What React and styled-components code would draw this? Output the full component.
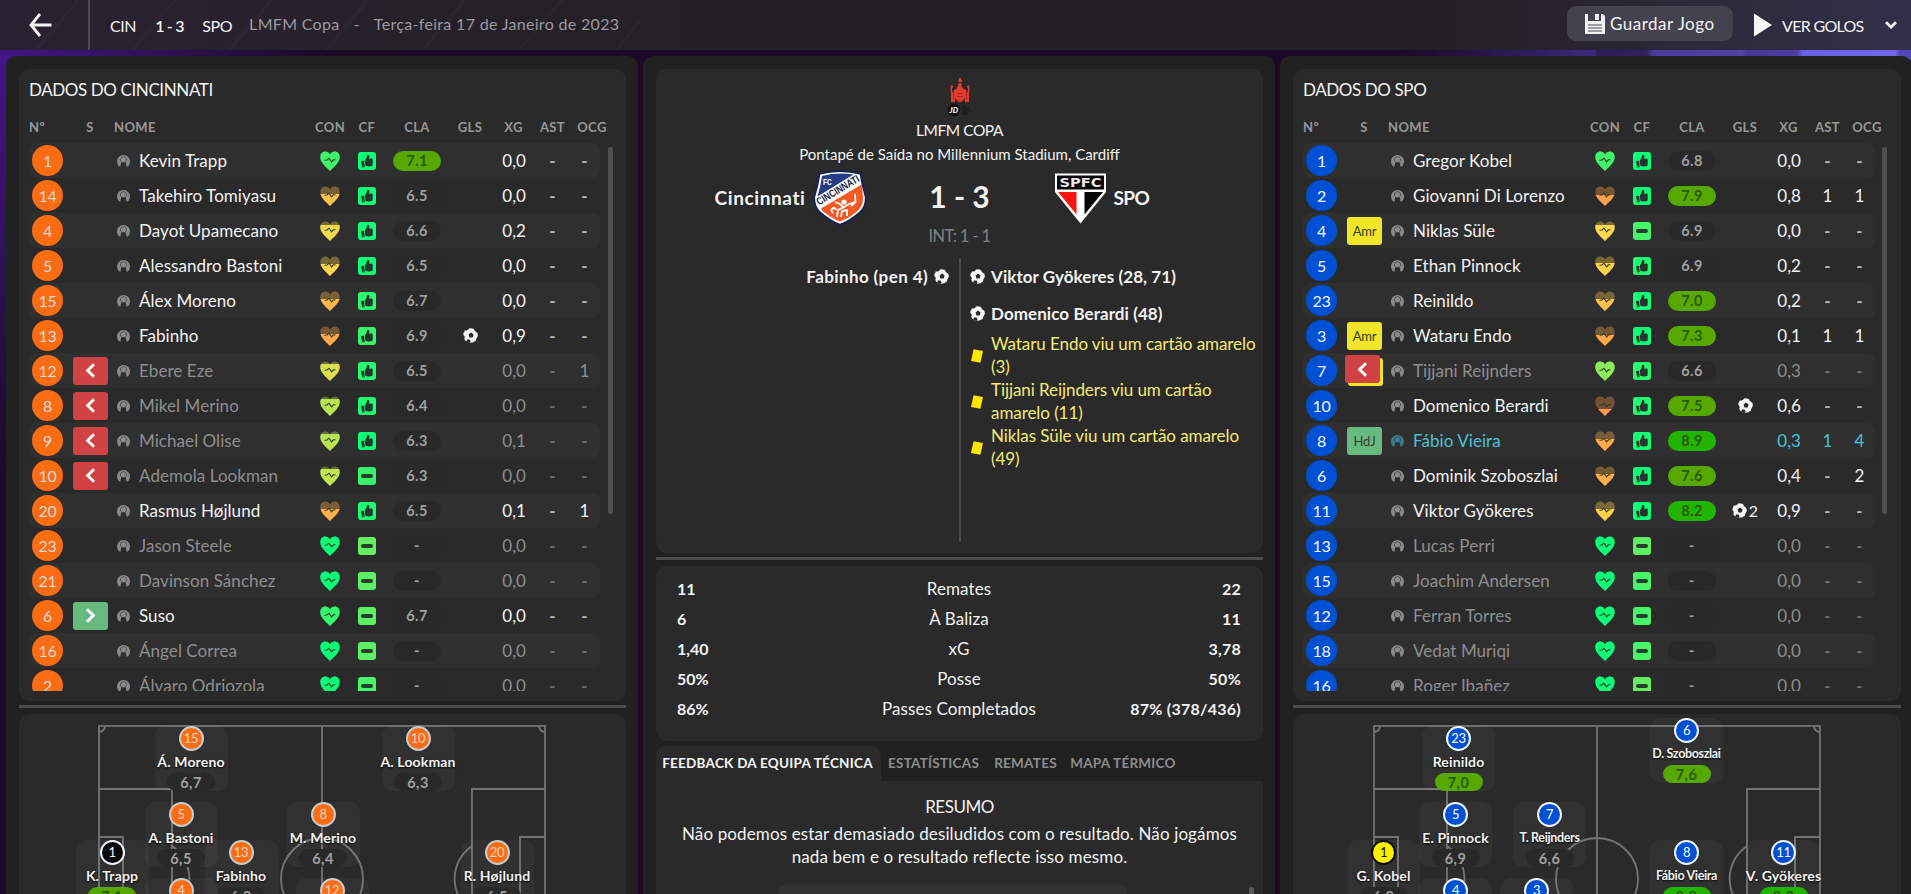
import React from 'react';
import styled, { createGlobalStyle, css } from 'styled-components';
import { FaThumbsUp } from 'react-icons/fa';

const GlobalStyle = createGlobalStyle`
  * { box-sizing: border-box; }
  body {
    margin: 0;
    overflow: hidden;
    background: #1a0a26;
    color: #f2f2f2;
    font-family: Lato, "Open Sans", sans-serif;
    font-size: 17px;
  }
`;

const Page = styled.div`
  height: 894px;
  overflow: hidden;
  display: flex;
  flex-direction: column;
  background:
    linear-gradient(90deg, transparent 1400px, #2a1850 1500px, #3c2a80 1594px, #2d1a58 1598px, #33215f 1647px, #4a3b9c 1653px, #5142a6 1742px, #44379a 1748px, #4c3fa4 1797px, #6c60e2 1803px, #7166e8 1895px, #5245b5 1900px) 0 0 / 100% 66px no-repeat,
    radial-gradient(ellipse 330px 420px at 0 60px, #401688 0, #2c1050 55%, transparent 100%),
    #1a0a26;
`;

const TopBar = styled.header`
  height: 50px;
  flex: none;
  display: flex;
  align-items: center;
  background:
    repeating-linear-gradient(130deg, transparent 0 58px, rgba(150, 120, 190, 0.04) 59px 61px, transparent 62px 74px) 0 0 / 640px 100% no-repeat,
    linear-gradient(90deg, #2a2132 0, #232126 30%, #221f24 75%, #2d2a3c 90%, #323049 100%);
`;

const BackButton = styled.div`
  width: 90px;
  height: 50px;
  padding-left: 29px;
  display: flex;
  align-items: center;
  border-right: 2px solid #4f4955;
`;

const TopScore = styled.div`
  display: flex;
  gap: 19px;
  margin-left: 20px;
  font-size: 16px;
  letter-spacing: -0.4px;
  white-space: nowrap;
  span:nth-child(2) {
    width: 28px;
    font-weight: 600;
    letter-spacing: -0.8px;
  }
`;

const TopMeta = styled.div`
  display: flex;
  margin: -3px 0 0 17px;
  gap: 14px;
  color: #9c999f;
  font-size: 16px;
  letter-spacing: 0.32px;
  white-space: nowrap;
`;

const TopActions = styled.div`
  margin-left: auto;
  display: flex;
  align-items: center;
  padding-right: 14px;
`;

const SaveButton = styled.div`
  width: 166px;
  height: 35px;
  margin: -3px 20px 0 0;
  border-radius: 9px;
  background: #45424f;
  display: flex;
  align-items: center;
  padding-left: 18px;
  gap: 5px;
  letter-spacing: 0.5px;
  white-space: nowrap;
`;

const WatchGoals = styled.div`
  display: flex;
  align-items: center;
  font-size: 16px;
  letter-spacing: -0.7px;
  white-space: nowrap;
  span { width: 103px; margin-left: 10px; }
`;

const Columns = styled.main`
  flex: 1;
  min-height: 0;
  display: grid;
  grid-template-columns: 632px 632px 632px;
  gap: 5px;
  padding: 6px 0 0 6px;
`;

const Panel = styled.section`
  display: flex;
  flex-direction: column;
  min-height: 0;
  background: #212121;
  border-radius: 10px 10px 0 0;
  padding: 13px ${p => (p.$away ? 11 : 12)}px 0 13px;
`;

const Card = styled.div`
  flex: none;
  height: ${p => (p.$height ? p.$height + 'px' : 'auto')};
  background: #2a2a2a;
  border-radius: 11px;
`;

const Splitter = styled.div`
  flex: none;
  height: 3px;
  margin: 4px 0 6px;
  background: #4b4b4b;
`;

/* squad table */

const SquadCard = styled(Card)`
  padding: 0 0 0 10px;
`;

const CardTitle = styled.h2`
  margin: 0;
  padding-top: 10px;
  height: 48px;
  font-size: 17px;
  line-height: 21px;
  font-weight: 400;
  letter-spacing: -0.4px;
`;

const HeaderRow = styled.div`
  display: grid;
  grid-template-columns: 36px 50px 1fr 40px 34px 66px 40px 47px 31px 48px;
  width: ${p => (p.$away ? 588 : 587)}px;
  height: 26px;
  line-height: 20px;
  font-size: 13px;
  font-weight: 700;
  letter-spacing: 0.4px;
  color: #989898;
  text-align: center;
  span:first-child, span:nth-child(3) { text-align: left; }
  span:nth-child(3) { margin-left: -1px; }
`;

const ScrollArea = styled.div`
  display: flex;
  justify-content: space-between;
  height: 548px;
  padding-right: ${p => (p.$away ? 14 : 13)}px;
`;

const Rows = styled.div`
  width: ${p => (p.$away ? 572 : 571)}px;
  overflow: hidden;
`;

const ScrollThumb = styled.div`
  width: 5px;
  height: 367px;
  margin-top: 4px;
  border-radius: 3px;
  background: #505050;
`;

const Row = styled.div`
  display: grid;
  grid-template-columns: 36px 50px 1fr 40px 34px 66px 40px 36px 10px 33px 31px;
  align-items: center;
  height: 35px;
  border-radius: 8px;
  letter-spacing: 0.06px;
  color: ${p => (p.$tone === 'mom' ? '#45c3d6' : p.$tone === 'off' ? '#8e8e8e' : '#f2f2f2')};
  &:nth-child(odd) { background: #2f2f30; }
`;

const ShirtNumber = styled.span`
  width: 31px;
  height: 31px;
  margin-left: 3px;
  padding-bottom: 1px;
  border-radius: 50%;
  display: flex;
  align-items: center;
  justify-content: center;
  font-size: 16px;
  letter-spacing: -0.3px;
  background: ${p => (p.$away ? '#0050d4' : '#fc6c13')};
  color: ${p => (p.$away ? '#f4f7ff' : '#d5dadb')};
`;

const statusColors = {
  out: '#d04244',
  in: '#67bb80',
  card: '#f0e526',
  hdj: '#67bb80',
};

const StatusBadge = styled.span`
  width: 35px;
  height: 28px;
  margin: ${p => (p.$booked ? '-3px 0 0 6px' : '0 0 0 8px')};
  border-radius: 3px;
  display: flex;
  align-items: center;
  justify-content: center;
  background: ${p => statusColors[p.$kind]};
  color: #34402e;
  font-size: 13px;
  letter-spacing: -0.2px;
  ${p => p.$booked && css`box-shadow: 3px 3px 0 #f0e526;`}
`;

const PlayerName = styled.span`
  display: flex;
  align-items: center;
  gap: 9px;
  padding: 0 0 1px 2px;
  white-space: nowrap;
  svg {
    flex: none;
    color: ${p => (p.$mom ? '#347f8b' : '#8a8a8a')};
  }
`;

const Center = styled.span`
  display: flex;
  align-items: center;
  justify-content: center;
`;

const Form = styled.span`
  width: 18px;
  height: 18px;
  margin-left: 8px;
  border-radius: 3px;
  display: flex;
  align-items: center;
  justify-content: center;
  background: ${p => p.$color};
  color: #25352b;
  svg { transform: rotate(-8deg); }
`;

const FormDash = styled.i`
  width: 12px;
  height: 4px;
  border-radius: 2px;
  background: #24402c;
`;

const ratingColors = { good: '#57a800', great: '#21b400', none: '#292929' };

const Rating = styled.span`
  width: 48px;
  height: ${p => p.$height || 20}px;
  border-radius: 10px;
  display: flex;
  align-items: center;
  justify-content: center;
  font-size: 14.5px;
  font-weight: 700;
  letter-spacing: 0.4px;
  background: ${p => ratingColors[p.$level]};
  color: ${p => (p.$level === 'none' ? '#a0a0a0' : '#2a5a0c')};
`;

const Goals = styled(Center)`
  gap: 2px;
  font-size: 16px;
`;

const XG = styled.span`
  padding-bottom: 1px;
  text-align: right;
`;

const Stat = styled.span`
  padding-bottom: 1px;
  text-align: center;
  font-weight: ${p => (p.$empty ? 700 : 400)};
  opacity: ${p => (p.$empty ? 0.7 : 1)};
`;

/* pitch */

const PitchCard = styled(Card)`
  flex: 1;
  min-height: 0;
  position: relative;
  overflow: hidden;
  border-radius: 11px 11px 0 0;
`;

const PitchLines = styled.svg`
  position: absolute;
  left: ${p => (p.$away ? 80 : 79)}px;
  top: 10px;
`;

const Marker = styled.div`
  position: absolute;
  left: ${p => p.$x - 37}px;
  top: ${p => p.$y}px;
  width: 73px;
  height: 65px;
  border-radius: 10px;
  display: flex;
  flex-direction: column;
  align-items: center;
  background: rgba(255, 255, 255, 0.035);
`;

const MarkerShirt = styled.span`
  width: 25px;
  height: 25px;
  flex: none;
  padding-bottom: 1px;
  border-radius: 50%;
  border: 2px solid ${p => p.$ring};
  display: flex;
  align-items: center;
  justify-content: center;
  font-size: 13px;
  letter-spacing: -0.3px;
  background: ${p => p.$fill};
  color: ${p => p.$ink};
`;

const MarkerName = styled.span`
  height: 22px;
  line-height: 21px;
  font-size: ${p => (p.$long ? 12.5 : 14)}px;
  font-weight: 700;
  letter-spacing: ${p => (p.$long ? -0.35 : 0.15)}px;
  white-space: nowrap;
  text-shadow: 0 1px 2px #000;
`;

/* match overview */

const MatchCard = styled(Card)`
  display: flex;
  flex-direction: column;
  align-items: center;
  padding-top: 9px;
`;

const CompName = styled.div`
  margin-top: 1px;
  height: 24px;
  line-height: 23px;
  font-size: 15.5px;
  letter-spacing: -0.45px;
`;

const Venue = styled.div`
  height: 25px;
  line-height: 23px;
  font-size: 15px;
  white-space: nowrap;
`;

const ScoreLine = styled.div`
  display: grid;
  grid-template-columns: 1fr 150px 1fr;
  width: 100%;
  height: 58px;
  align-items: center;
`;

const Team = styled.div`
  display: flex;
  justify-content: ${p => (p.$away ? 'flex-start' : 'flex-end')};
  align-items: center;
  gap: ${p => (p.$away ? 8 : 7)}px;
  padding: ${p => (p.$away ? '2px 0 0 20px' : '1px 18px 0 0')};
  font-size: 19px;
  font-weight: 700;
  letter-spacing: ${p => (p.$away ? -0.6 : 0.6)}px;
  svg { flex: none; letter-spacing: 0; }
`;

const TeamName = styled.span`
  padding-bottom: 1px;
`;

const Score = styled.div`
  padding-bottom: 3px;
  text-align: center;
  font-size: 30px;
  font-weight: 700;
  white-space: nowrap;
`;

const HalfTime = styled.div`
  height: 22px;
  line-height: 20px;
  font-size: 16.5px;
  letter-spacing: -0.6px;
  color: #808080;
`;

const Events = styled.div`
  display: grid;
  grid-template-columns: 303px 304px;
  height: 284px;
  margin-top: 10px;
  align-self: stretch;
`;

const EventColumn = styled.div`
  padding-left: ${p => (p.$away ? '9px' : '0')};
  padding-right: ${p => (p.$away ? '0' : '10px')};
  border-left: ${p => (p.$away ? '2px solid #4a4a4a' : 'none')};
`;

const Goal = styled.div`
  display: flex;
  align-items: center;
  justify-content: ${p => (p.$away ? 'flex-start' : 'flex-end')};
  gap: 6px;
  height: 37px;
  font-size: 17px;
  font-weight: 700;
  letter-spacing: ${p => (p.$away ? 0.07 : 0.4)}px;
  white-space: nowrap;
  span { padding-bottom: 1px; }
`;

const Booking = styled.div`
  display: flex;
  align-items: center;
  gap: 8px;
  height: 46px;
  font-size: 17px;
  line-height: 23px;
  letter-spacing: -0.07px;
  color: #f4ea72;
  svg { flex: none; margin: 1px 0 0 1px; }
`;

const StatsCard = styled(Card)`
  padding: 8px 22px 0 21px;
`;

const StatRow = styled.div`
  display: grid;
  grid-template-columns: 1fr 200px 1fr;
  height: 30px;
  line-height: 30px;
  font-size: 16px;
  b:last-child { text-align: right; letter-spacing: 0.25px; }
  span {
    text-align: center;
    white-space: nowrap;
    font-size: 17px;
    letter-spacing: 0.1px;
  }
`;

const Tabs = styled.nav`
  flex: none;
  display: flex;
  height: 35px;
  margin-top: 5px;
`;

const Tab = styled.div`
  width: ${p => p.$width}px;
  padding-right: 2px;
  border-radius: 10px 10px 0 0;
  text-align: center;
  line-height: 35px;
  font-size: 13.5px;
  font-weight: 700;
  letter-spacing: 0.25px;
  white-space: nowrap;
  background: ${p => (p.$active ? '#2a2a2a' : '#202020')};
  color: ${p => (p.$active ? '#f5f5f5' : '#8d8d8d')};
`;

const Feedback = styled.div`
  flex: 1;
  min-height: 0;
  overflow: hidden;
  background: #2a2a2a;
  display: grid;
  grid-template-columns: 112px 1fr 112px;
  grid-template-rows: 41px 62px 20px;
  align-content: start;
  justify-items: center;
`;

const FeedbackTitle = styled.div`
  grid-column: 1 / -1;
  padding-top: 15px;
  line-height: 22px;
  letter-spacing: -0.5px;
`;

const FeedbackText = styled.p`
  grid-column: 1 / -1;
  margin: 0;
  width: 574px;
  text-align: center;
  line-height: 23px;
  letter-spacing: 0.13px;
`;

const FeedbackItem = styled.div`
  grid-column: 2;
  width: 349px;
  margin-left: -15px;
  border-radius: 9px 9px 0 0;
  background: #323232;
`;

const FeedbackScroll = styled.div`
  justify-self: end;
  width: 5px;
  margin: 3px 9px 0 0;
  border-radius: 3px 3px 0 0;
  background: #5a5a5a;
`;

const PersonIcon = () => (
  <svg width="13" height="13" viewBox="0 0 13 13">
    <path fill="currentColor" fillRule="evenodd" d="M2.4 12.6A6.5 6.5 0 1 1 10.6 12.6L9.4 12.6C9.4 10.4 9 9.2 8.4 8.3A3.2 3.2 0 1 0 4.6 8.3C4 9.2 3.6 10.4 3.6 12.6Z" />
    <circle cx="6.5" cy="5.7" r="2.6" fill="currentColor" />
  </svg>
);

const heartPath = 'M10 20C6.5 16 0.3 12.2 0.3 6C0.3 2.6 2.5 0.5 5.2 0.5C7.4 0.5 9 1.7 10 3.6C11 1.7 12.6 0.5 14.8 0.5C17.5 0.5 19.7 2.6 19.7 6C19.7 12.2 13.5 16 10 20Z';

function Heart({ color, level }) {
  return (
    <svg width="20" height="20" viewBox="0 0 20 20">
      <path d={heartPath} fill={color} opacity="0.36" />
      <svg y={level} width="20" height={20 - level} viewBox={`0 ${level} 20 ${20 - level}`}>
        <path d={heartPath} fill={color} />
      </svg>
      <path d="M4.5 9.3L7 9L9 7.2L11.6 10.8L13.4 8.8H15.5" fill="none" stroke="#2b3a24" strokeWidth="1.1" />
    </svg>
  );
}

const Ball = ({ size = 15 }) => (
  <svg width={size} height={size} viewBox="0 0 15 15">
    <circle cx="7.5" cy="7.5" r="7.3" fill="#f4f4f4" />
    <path fill="#2a2a2a" d="M8 4.6L10.6 6.6L9.6 9.5L6.5 9.5L5.6 6.6ZM0 6.5L1.8 8.8L1.2 11.4L0 11ZM2.6 0L6.2 0L5 1.9L2.4 2.8ZM11 0L15 3L14.2 4.8L11.8 3ZM15 8.5L13.5 10L13.2 12.8L15 12ZM3.8 11.6L6.6 11.6L7.6 13.6L6.4 15L3.4 14Z" />
  </svg>
);

const YellowCard = () => (
  <svg width="12" height="14" viewBox="0 0 12 14">
    <path d="M2.6 0.3L12 2.1L9.4 13.8L0 12Z" fill="#ffe500" />
  </svg>
);

const Chevron = ({ dir }) => (
  <svg width="11" height="15" viewBox="0 0 11 15">
    <path d={dir === 'left' ? 'M9 1.3L2.6 7.5L9 13.7' : 'M2 1.3L8.4 7.5L2 13.7'} fill="none" stroke="#fff" strokeWidth="2.8" />
  </svg>
);

const CupLogo = () => (
  <svg width="26" height="40" viewBox="0 0 26 40">
    <path fill="#e23a2c" d="M11.5 5H14.5V8L16.5 11L19.5 12.5V14H21V10L20 9V7.5H22.5V12L22 15V24H18V20L15.5 23L13 24.5L10.5 23L8 20V24H4V15L3.5 12V7.5H6V9L5 10V14H6.5V12.5L9.5 11L11 8ZM12 0H14V2H15V4H11.5V2H12Z" />
    <path fill="#a52720" d="M6 14H7V21H6ZM19 14H20V21H19ZM10 15H16V16H10ZM10 18H16V19H10Z" />
    <circle cx="7" cy="32" r="6.2" fill="#141210" />
    <text x="6.8" y="34.8" fill="#fff" fontSize="7.5" fontWeight="900" fontStyle="italic" textAnchor="middle">JD</text>
    <path fill="#202020" d="M15 27H19V29H23V32H26V34H21V37H15Z" />
  </svg>
);

const CincinnatiLogo = () => (
  <svg width="54" height="56" viewBox="0 0 54 56">
    <path d="M5.5 3Q27 -2.5 48.5 3Q49.5 13 53.5 27Q54 37 48 43Q38 52 27 55.5Q16 52 6 43Q0 37 0.5 27Q4.5 13 5.5 3Z" fill="#14234f" />
    <path d="M7.3 4.5Q27 -0.5 46.7 4.5Q48 15 51.8 27Q52.3 36 46.5 41.5Q37 50 27 53.7Q17 50 7.5 41.5Q1.7 36 2.2 27Q6 15 7.3 4.5Z" fill="#fff" />
    <path d="M9 6Q24 2 40.5 4.5L4.5 26.5Q8 14 9 6Z" fill="#263c87" />
    <path d="M48.5 14.5L50 27Q50.5 35 45.5 40Q37 48 27 51.5Q18 48 9.5 41L8 38.5Z" fill="#f15a24" />
    <text x="14.5" y="14.5" fill="#fff" fontSize="9" fontWeight="700" textAnchor="middle" fontFamily="Liberation Sans, sans-serif" textLength="9" lengthAdjust="spacingAndGlyphs">FC</text>
    <text transform="translate(6 35.5) rotate(-31)" fill="#14234f" fontSize="10.5" fontWeight="700" fontFamily="Liberation Sans, sans-serif" textLength="48" lengthAdjust="spacingAndGlyphs">CINCINNATI</text>
    <path fill="none" stroke="#fff" strokeWidth="1.8" d="M20 43Q17 40 20 38Q23 38 23 40M24 47L25 40L31 37L36 34L42 32M28 47L29 41L34 40L34 46M22 32L27 34L31 38M42 24L42.5 32L38 36" />
    <circle cx="31" cy="32" r="2.6" fill="#fff" />
  </svg>
);

const SaoPauloLogo = () => (
  <svg width="51" height="51" viewBox="0 0 51 51">
    <path d="M0 0.5H51V19L25.5 50.5L0 19Z" fill="#fff" />
    <path d="M2 2.5H49V16.5H2Z" fill="#0a0a0a" />
    <path d="M3 19H21.5V41.5Z" fill="#fa1414" />
    <path d="M48 19H29.5V41.5Z" fill="#050505" />
    <text x="25.5" y="14" fill="#e8e8e8" fontSize="12.5" fontWeight="700" textAnchor="middle" fontFamily="DejaVu Sans, sans-serif" textLength="42" lengthAdjust="spacingAndGlyphs">SPFC</text>
  </svg>
);

// n, status, name, heart color, heart level, form ('+' thumb, '-' dash), form color, rating, goals, xg, ast, ocg, tone
const homeSquad = [
  [1, '', 'Kevin Trapp', '#3ef26c', 0, '+', '#0dff78', '7.1', 0, '0,0', '-', '-', 'on'],
  [14, '', 'Takehiro Tomiyasu', '#ffc34c', 8, '+', '#0dff78', '6.5', 0, '0,0', '-', '-', 'on'],
  [4, '', 'Dayot Upamecano', '#eddb4e', 4, '+', '#14ff76', '6.6', 0, '0,2', '-', '-', 'on'],
  [5, '', 'Alessandro Bastoni', '#ffd34c', 8, '+', '#0dff78', '6.5', 0, '0,0', '-', '-', 'on'],
  [15, '', 'Álex Moreno', '#ffb84c', 8, '+', '#2bfa6e', '6.7', 0, '0,0', '-', '-', 'on'],
  [13, '', 'Fabinho', '#ffa94a', 8, '+', '#3af56c', '6.9', 1, '0,9', '-', '-', 'on'],
  [12, 'out', 'Ebere Eze', '#dade50', 3, '+', '#24fb70', '6.5', 0, '0,0', '-', '1', 'off'],
  [8, 'out', 'Mikel Merino', '#b9e352', 3, '+', '#1dff72', '6.4', 0, '0,0', '-', '-', 'off'],
  [9, 'out', 'Michael Olise', '#b9e352', 3, '+', '#0dff78', '6.3', 0, '0,1', '-', '-', 'off'],
  [10, 'out', 'Ademola Lookman', '#c3e352', 3, '-', '#3af56c', '6.3', 0, '0,0', '-', '-', 'off'],
  [20, '', 'Rasmus Højlund', '#ffb04a', 8, '+', '#1dff72', '6.5', 0, '0,1', '-', '1', 'on'],
  [23, '', 'Jason Steele', '#0bfc76', 0, '-', '#66ee62', '-', 0, '0,0', '-', '-', 'off'],
  [21, '', 'Davinson Sánchez', '#0bfc76', 0, '-', '#5df064', '-', 0, '0,0', '-', '-', 'off'],
  [6, 'in', 'Suso', '#36f66d', 0, '-', '#5df064', '6.7', 0, '0,0', '-', '-', 'on'],
  [16, '', 'Ángel Correa', '#0bfc76', 0, '-', '#5df064', '-', 0, '0,0', '-', '-', 'off'],
  [2, '', 'Álvaro Odriozola', '#0bfc76', 0, '-', '#48f468', '-', 0, '0,0', '-', '-', 'off'],
];

const awaySquad = [
  [1, '', 'Gregor Kobel', '#3ef26c', 0, '+', '#0dff78', '6.8', 0, '0,0', '-', '-', 'on'],
  [2, '', 'Giovanni Di Lorenzo', '#ffa04a', 9, '+', '#0dff78', '7.9', 0, '0,8', '1', '1', 'on'],
  [4, 'card', 'Niklas Süle', '#fbd84e', 4, '-', '#48f468', '6.9', 0, '0,0', '-', '-', 'on'],
  [5, '', 'Ethan Pinnock', '#ffd24c', 7, '+', '#1dff72', '6.9', 0, '0,2', '-', '-', 'on'],
  [23, '', 'Reinildo', '#ffbf4c', 8, '+', '#14ff76', '7.0', 0, '0,2', '-', '-', 'on'],
  [3, 'card', 'Wataru Endo', '#ffa94a', 9, '+', '#0dff78', '7.3', 0, '0,1', '1', '1', 'on'],
  [7, 'booked', 'Tijjani Reijnders', '#8dea5a', 0, '+', '#2bfa6e', '6.6', 0, '0,3', '-', '-', 'off'],
  [10, '', 'Domenico Berardi', '#ff964a', 13, '+', '#1dff72', '7.5', 1, '0,6', '-', '-', 'on'],
  [8, 'hdj', 'Fábio Vieira', '#ffa94a', 8, '+', '#14ff76', '8.9', 0, '0,3', '1', '4', 'mom'],
  [6, '', 'Dominik Szoboszlai', '#ffad4a', 8, '+', '#0dff78', '7.6', 0, '0,4', '-', '2', 'on'],
  [11, '', 'Viktor Gyökeres', '#ffd04c', 8, '+', '#0dff78', '8.2', 2, '0,9', '-', '-', 'on'],
  [13, '', 'Lucas Perri', '#0bfc76', 0, '-', '#5df064', '-', 0, '0,0', '-', '-', 'off'],
  [15, '', 'Joachim Andersen', '#0bfc76', 0, '-', '#48f468', '-', 0, '0,0', '-', '-', 'off'],
  [12, '', 'Ferran Torres', '#0bfc76', 0, '-', '#48f468', '-', 0, '0,0', '-', '-', 'off'],
  [18, '', 'Vedat Muriqi', '#0bfc76', 0, '-', '#48f468', '-', 0, '0,0', '-', '-', 'off'],
  [16, '', 'Roger Ibañez', '#0bfc76', 0, '-', '#66ee62', '-', 0, '0,0', '-', '-', 'off'],
];

// x, y inside the pitch card
const homeMarkers = [
  [15, 'Á. Moreno', '6,7', 172.5, 12],
  [10, 'A. Lookman', '6,3', 399.5, 12],
  [1, 'K. Trapp', '7,1', 93.5, 126],
  [5, 'A. Bastoni', '6,5', 162.5, 88],
  [13, 'Fabinho', '6,9', 222.5, 126],
  [8, 'M. Merino', '6,4', 304.5, 88],
  [20, 'R. Højlund', '6,5', 478.5, 126],
  [4, 'D. Upamecano', '6,6', 162.5, 164],
  [12, 'E. Eze', '6,5', 313.5, 164],
];

const awayMarkers = [
  [23, 'Reinildo', '7,0', 166, 12],
  [6, 'D. Szoboszlai', '7,6', 394, 4],
  [1, 'G. Kobel', '6,8', 91, 126],
  [5, 'E. Pinnock', '6,9', 163, 88],
  [7, 'T. Reijnders', '6,6', 257, 88],
  [8, 'Fábio Vieira', '8,9', 394, 126],
  [11, 'V. Gyökeres', '8,2', 491, 126],
  [4, 'N. Süle', '6,9', 163, 164],
  [3, 'W. Endo', '7,3', 244, 164],
];

function ratingLevel(value) {
  const n = parseFloat(value.replace(',', '.'));
  if (n >= 8) return 'great';
  if (n >= 7) return 'good';
  return 'none';
}

function Status({ kind }) {
  if (!kind) return <span />;
  if (kind === 'card') return <StatusBadge $kind="card">Amr</StatusBadge>;
  if (kind === 'hdj') return <StatusBadge $kind="hdj">HdJ</StatusBadge>;
  if (kind === 'booked') return <StatusBadge $kind="out" $booked><Chevron dir="left" /></StatusBadge>;
  return <StatusBadge $kind={kind}><Chevron dir={kind === 'out' ? 'left' : 'right'} /></StatusBadge>;
}

function Squad({ title, squad, away }) {
  return (
    <SquadCard $height={632}>
      <CardTitle>{title}</CardTitle>
      <HeaderRow $away={away}>
        <span>Nº</span><span>S</span><span>NOME</span><span>CON</span><span>CF</span>
        <span>CLA</span><span>GLS</span><span>XG</span><span>AST</span><span>OCG</span>
      </HeaderRow>
      <ScrollArea $away={away}>
        <Rows $away={away}>
          {squad.map(([n, status, name, heart, level, form, formColor, rating, goals, xg, ast, ocg, tone]) => (
            <Row key={n} $tone={tone}>
              <ShirtNumber $away={away}>{n}</ShirtNumber>
              <Status kind={status} />
              <PlayerName $mom={tone === 'mom'}><PersonIcon />{name}</PlayerName>
              <Center><Heart color={heart} level={level} /></Center>
              <Form $color={formColor}>
                {form === '+' ? <FaThumbsUp size={12} /> : <FormDash />}
              </Form>
              <Center><Rating $level={ratingLevel(rating)}>{rating}</Rating></Center>
              <Goals>{goals > 0 && <Ball />}{goals > 1 && goals}</Goals>
              <XG>{xg}</XG>
              <span />
              <Stat $empty={ast === '-'}>{ast}</Stat>
              <Stat $empty={ocg === '-'}>{ocg}</Stat>
            </Row>
          ))}
        </Rows>
        <ScrollThumb />
      </ScrollArea>
    </SquadCard>
  );
}

function Pitch({ markers, away }) {
  return (
    <PitchCard>
      <PitchLines $away={away} width="449" height="320" fill="none" stroke="#747474" strokeWidth="1.8">
        <rect x="1" y="2" width="446" height="308" />
        <path d="M224 2V310M1 65H74V247H1M1 113H25V199H1M447 65H374V247H447M447 113H422V199H447" />
        <circle cx="224" cy="155" r="41" />
        <path d="M74 122A40 40 0 0 1 74 188M374 122A40 40 0 0 0 374 188M7 2A6 6 0 0 1 1 8M441 2A6 6 0 0 0 447 8" />
      </PitchLines>
      {markers.map(([n, name, rating, x, y]) => {
        const keeper = n === 1;
        const fill = keeper ? (away ? '#fff000' : '#080808') : (away ? '#0050d4' : '#fc6c13');
        const ring = keeper && away ? '#0c0c0c' : (away || keeper ? '#f0f4fa' : '#c3cdd2');
        const ink = keeper && away ? '#111' : (away || keeper ? '#fff' : '#dfd8cd');
        return (
          <Marker key={n} $x={x} $y={y}>
            <MarkerShirt $fill={fill} $ring={ring} $ink={ink}>{n}</MarkerShirt>
            <MarkerName $long={name.length > 11}>{name}</MarkerName>
            <Rating $height={18} $level={ratingLevel(rating)}>{rating}</Rating>
          </Marker>
        );
      })}
    </PitchCard>
  );
}

const matchStats = [
  ['11', 'Remates', '22'],
  ['6', 'À Baliza', '11'],
  ['1,40', 'xG', '3,78'],
  ['50%', 'Posse', '50%'],
  ['86%', 'Passes Completados', '87% (378/436)'],
];

const bookings = [
  'Wataru Endo viu um cartão amarelo (3)',
  'Tijjani Reijnders viu um cartão amarelo (11)',
  'Niklas Süle viu um cartão amarelo (49)',
];

export default function App() {
  return (
    <>
      <GlobalStyle />
      <Page>
        <TopBar>
          <BackButton>
            <svg width="23" height="24" viewBox="0 0 23 24">
              <path d="M11 1L2 12L11 23M2 12H22.5" fill="none" stroke="#f4f4f4" strokeWidth="2.8" />
            </svg>
          </BackButton>
          <TopScore><span>CIN</span><span>1 - 3</span><span>SPO</span></TopScore>
          <TopMeta><span>LMFM Copa</span><span>-</span><span>Terça-feira 17 de Janeiro de 2023</span></TopMeta>
          <TopActions>
            <SaveButton>
              <svg width="20" height="20" viewBox="0 0 20 20">
                <path fill="#f2f2f2" d="M0 0H3V7H16V0H18L20 2V20H0ZM10 0H14V6H10Z" />
                <path stroke="#4a4754" strokeWidth="1.2" d="M3 11H17M3 14H17M3 17H17" />
              </svg>
              Guardar Jogo
            </SaveButton>
            <WatchGoals>
              <svg width="19" height="24" viewBox="0 0 19 24"><path d="M1 0.5L19 12L1 23.5Z" fill="#f6f6f6" /></svg>
              <span>VER GOLOS</span>
              <svg width="12" height="8" viewBox="0 0 12 8"><path d="M1 1.2L6 6L11 1.2" fill="none" stroke="#f2f2f2" strokeWidth="2.8" /></svg>
            </WatchGoals>
          </TopActions>
        </TopBar>

        <Columns>
          <Panel>
            <Squad title="DADOS DO CINCINNATI" squad={homeSquad} />
            <Splitter />
            <Pitch markers={homeMarkers} />
          </Panel>

          <Panel>
            <MatchCard $height={484}>
              <CupLogo />
              <CompName>LMFM COPA</CompName>
              <Venue>Pontapé de Saída no Millennium Stadium, Cardiff</Venue>
              <ScoreLine>
                <Team><TeamName>Cincinnati</TeamName><CincinnatiLogo /></Team>
                <Score>1 - 3</Score>
                <Team $away><SaoPauloLogo /><TeamName>SPO</TeamName></Team>
              </ScoreLine>
              <HalfTime>INT: 1 - 1</HalfTime>
              <Events>
                <EventColumn>
                  <Goal><span>Fabinho (pen 4)</span> <Ball /></Goal>
                </EventColumn>
                <EventColumn $away>
                  <Goal $away><Ball /> <span>Viktor Gyökeres (28, 71)</span></Goal>
                  <Goal $away><Ball /> <span>Domenico Berardi (48)</span></Goal>
                  {bookings.map(text => (
                    <Booking key={text}><YellowCard /><span>{text}</span></Booking>
                  ))}
                </EventColumn>
              </Events>
            </MatchCard>
            <Splitter />
            <StatsCard $height={175}>
              {matchStats.map(([home, label, away]) => (
                <StatRow key={label}><b>{home}</b><span>{label}</span><b>{away}</b></StatRow>
              ))}
            </StatsCard>
            <Tabs>
              <Tab $active $width={225}>FEEDBACK DA EQUIPA TÉCNICA</Tab>
              <Tab $width={107}>ESTATÍSTICAS</Tab>
              <Tab $width={77}>REMATES</Tab>
              <Tab $width={118}>MAPA TÉRMICO</Tab>
            </Tabs>
            <Feedback>
              <FeedbackTitle>RESUMO</FeedbackTitle>
              <FeedbackText>
                Não podemos estar demasiado desiludidos com o resultado. Não jogámos nada bem e o resultado reflecte isso mesmo.
              </FeedbackText>
              <FeedbackItem />
              <FeedbackScroll />
            </Feedback>
          </Panel>

          <Panel $away>
            <Squad title="DADOS DO SPO" squad={awaySquad} away />
            <Splitter />
            <Pitch markers={awayMarkers} away />
          </Panel>
        </Columns>
      </Page>
    </>
  );
}
